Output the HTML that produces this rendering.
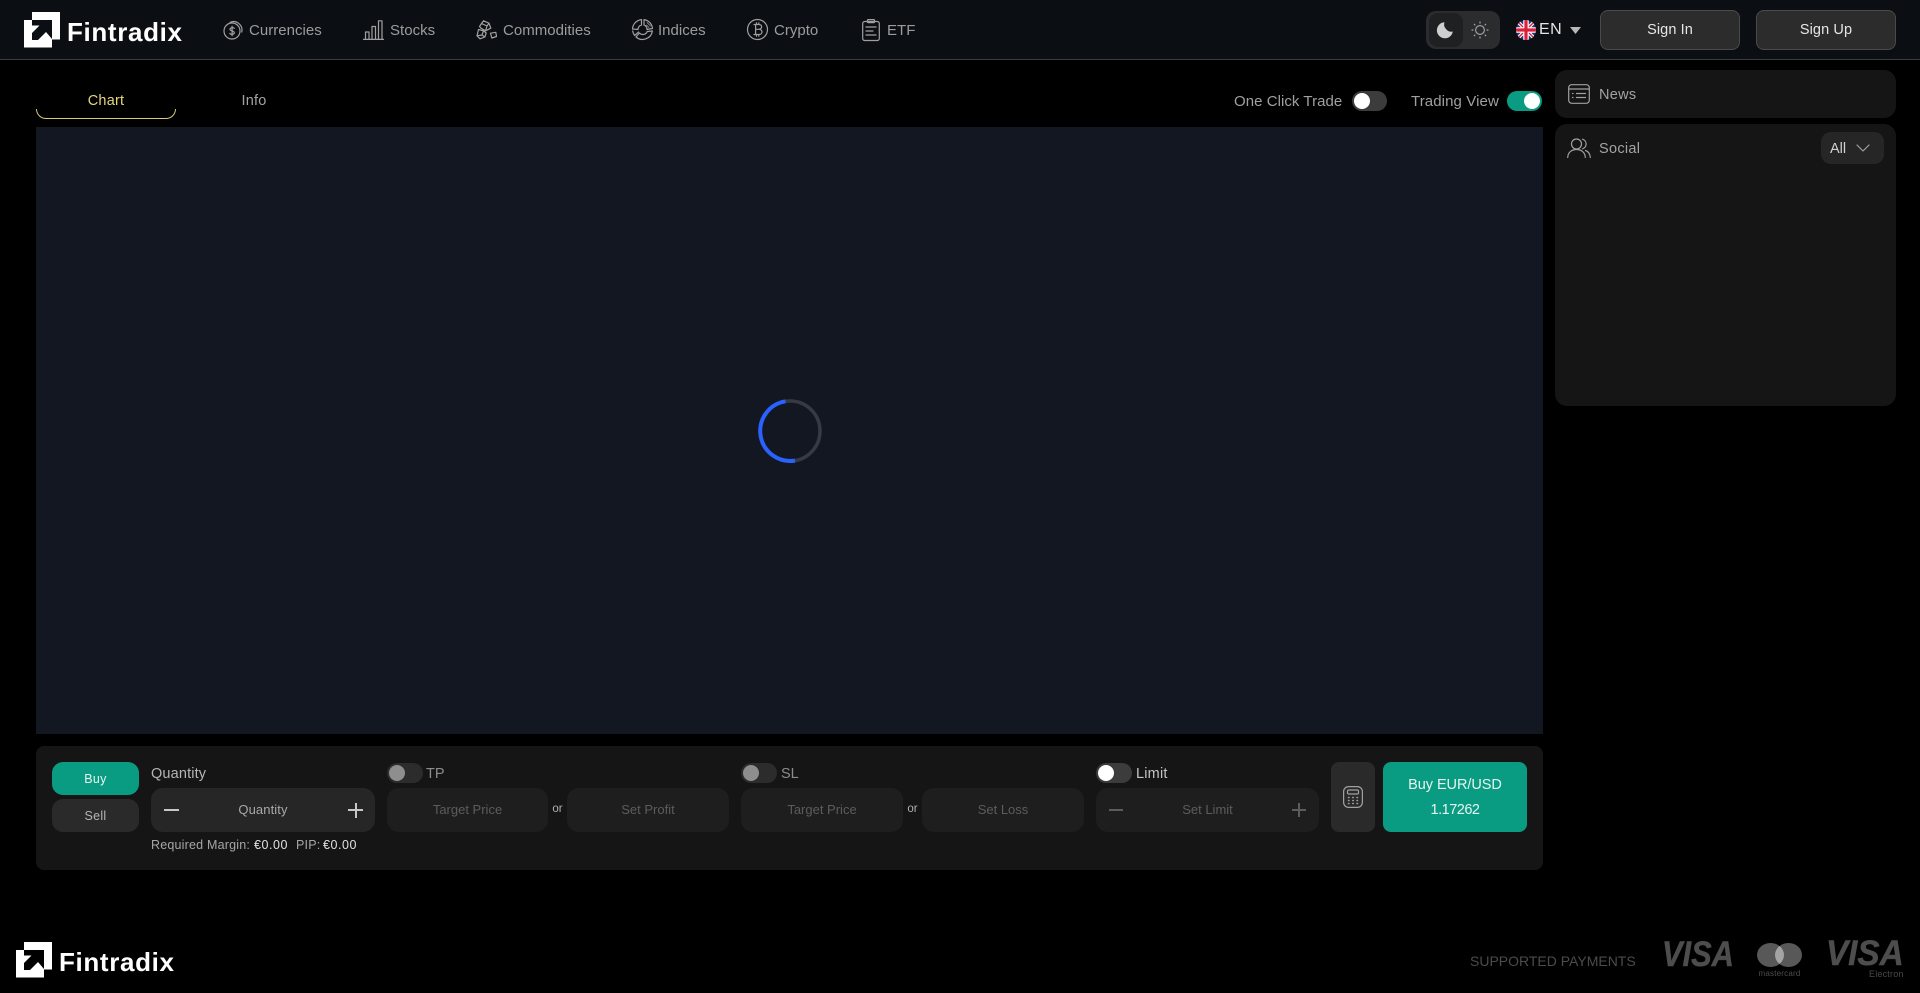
<!DOCTYPE html>
<html lang="en">
<head>
<meta charset="utf-8">
<title>Fintradix</title>
<style>
html,body{margin:0;padding:0;background:#000;width:1920px;height:993px;overflow:hidden}
body{position:relative;font-family:"Liberation Sans",sans-serif}
.a,.t{position:absolute}
.t{white-space:nowrap;line-height:20px;color:#a3a3a3;font-size:15px}
.c{text-align:center}
.nav{color:#9c9c9c;font-size:15px;top:20px;letter-spacing:.02px;line-height:21px}
svg{position:absolute;overflow:visible}
.ic{fill:none;stroke:#a0a0a0;stroke-width:1.2;stroke-linecap:round;stroke-linejoin:round}
.inp{position:absolute;top:788px;height:44px;border-radius:12px;background:#1e1e1e}
.ph{color:#5c5c5c;font-size:13px;top:800px;letter-spacing:0}
.sw{position:absolute;top:763px;height:20px;border-radius:10px;background:#2c2c2c}
.kn{position:absolute;width:16px;height:16px;border-radius:50%;top:2px;left:2px}
</style>
</head>
<body>

<!-- Header -->
<div class="a" style="left:0;top:0;width:1920px;height:59px;background:#0b0f13;border-bottom:1px solid #3a3c3e"></div>

<svg style="left:24px;top:12px" width="36" height="36" viewBox="0 0 36 36">
<path fill="#fff" d="M8 0H36V27.5H28V35.5H0V8H8Z"/>
<path fill="#0b0f13" d="M8 8H28V27L22 20 14 28H8V21L15.500 13.500H8Z"/>
</svg>
<div class="t" style="left:67px;top:20px;font-size:26px;line-height:24px;font-weight:700;color:#fff;letter-spacing:.65px">Fintradix</div>

<!-- Nav icons -->
<svg class="ic" style="left:223px;top:20px" width="20" height="20" viewBox="0 0 20 20" stroke="#b0b0b0" stroke-width="1.5">
<circle cx="9" cy="11" r="8"/><path d="M7 2.400A8.500 8.500 0 0 1 18.800 12"/><path d="M11.300 8.400C10.800 7.400 7.200 7.200 7 9.200 6.900 11.300 11.400 10.500 11.300 12.800 11.100 14.800 7.300 14.600 6.800 13.400M9.100 6.200V15.800"/>
</svg>
<svg class="ic" style="left:363px;top:20px" width="21" height="20" viewBox="0 0 21 20">
<path d="M.5 19.400H20.500M2.500 19V12H6V19M9 19V6.500H12.500V19M15.500 19V.8H19V19"/>
</svg>
<svg class="ic" style="left:476px;top:20px" width="21" height="20" viewBox="0 0 21 20" stroke-width="1.3">
<path d="M7.500 .8L13 3.200 14.800 8.200 9.500 10.800 5 8.200 3.500 6.500ZM5.500 3.500L11 6 9.500 10.800M11 6L13 3.200M7.500 .8L5.500 3.500 3.500 6.500"/>
<path d="M2.500 9.500L7.500 10.800 10.200 13 8.800 17 4 18.800 1 15.800ZM7.500 10.800L6 15 1 15.800M6 15L8.800 17"/>
<path d="M14.500 13.200L19.800 12.300 20.500 16.500 15.800 18Z"/>
</svg>
<svg class="ic" style="left:632px;top:19px" width="21" height="21" viewBox="0 0 21 21">
<path d="M9.500 .6A10 10 0 0 0 .5 10L6 10.500A4.600 4.600 0 0 1 9.500 6ZM12 .6A10 10 0 0 1 20.500 9.500L15 10.500A4.600 4.600 0 0 0 12 6ZM15.200 12.500L20.400 12A10 10 0 0 1 4 18L7.500 14A4.600 4.600 0 0 0 15.200 12.500ZM.7 12A10 10 0 0 0 2.600 16.500L6.500 13"/>
<path d="M15 3.500L18.500 7M14.500 6L17 8.500" stroke-width=".8"/>
</svg>
<svg class="ic" style="left:747px;top:19px" width="21" height="21" viewBox="0 0 21 21">
<circle cx="10.500" cy="10.500" r="10"/><path d="M7 5.500H12C15.500 5.500 15.500 10 12 10.300 16 10.500 16 15.500 12 15.500H7M8.600 5.500V15.500M8.600 10.300H12M9.500 3.800V5.500M11.800 3.800V5.500M9.500 15.500V17.200M11.800 15.500V17.200"/>
</svg>
<svg class="ic" style="left:862px;top:19px" width="18" height="22" viewBox="0 0 18 22" stroke-width="1.3">
<rect x=".7" y="2.500" width="16.600" height="19" rx="2"/><rect x="5.500" y=".6" width="7" height="3" rx=".8"/><path d="M4 8H14M4 12H11M4 16H14"/>
</svg>

<div class="t nav" style="left:249px">Currencies</div>
<div class="t nav" style="left:390px">Stocks</div>
<div class="t nav" style="left:503px">Commodities</div>
<div class="t nav" style="left:658px">Indices</div>
<div class="t nav" style="left:774px">Crypto</div>
<div class="t nav" style="left:887px">ETF</div>

<!-- Theme toggle -->
<div class="a" style="left:1426px;top:11px;width:74px;height:38px;border-radius:10px;background:#2b2c2e"></div>
<div class="a" style="left:1429px;top:13px;width:34px;height:34px;border-radius:9px;background:#1f2021"></div>
<svg style="left:1437px;top:22px" width="16" height="16" viewBox="0 0 16 16"><path fill="#cfcfcf" d="M7.500 .3A8 8 0 1 0 15.800 9.500 6.500 6.500 0 0 1 9 7 6.500 6.500 0 0 1 7.500 .3Z"/></svg>
<svg class="ic" style="left:1471px;top:21px" width="18" height="18" viewBox="0 0 18 18" stroke="#9a9a9a" stroke-width=".9"><circle cx="9" cy="9" r="4.400"/><path d="M9 1V2M9 16V17M1 9H2M16 9H17M3.300 3.300L3.900 3.900M14.100 14.100L14.700 14.700M3.300 14.700L3.900 14.100M14.100 3.900L14.700 3.300"/></svg>

<!-- Flag -->
<svg style="left:1516px;top:20px" width="20" height="20" viewBox="0 0 20 20">
<defs><clipPath id="fc"><ellipse cx="10" cy="10" rx="10" ry="10"/></clipPath></defs>
<g clip-path="url(#fc)"><rect width="20" height="20" fill="#27367c"/>
<path d="M0 0L20 20M20 0L0 20" stroke="#fff" stroke-width="3.500"/>
<path d="M0 0L20 20M20 0L0 20" stroke="#d8203a" stroke-width="1.400"/>
<path d="M10 0V20M0 10H20" stroke="#fff" stroke-width="5.500"/>
<path d="M10 0V20M0 10H20" stroke="#d8203a" stroke-width="3.200"/></g>
</svg>
<div class="t" style="left:1539px;top:20px;font-size:16px;color:#e4e4e4;letter-spacing:.4px">EN</div>
<svg style="left:1570px;top:27px" width="11" height="7" viewBox="0 0 11 7"><path fill="#b8b8b8" d="M0 0H11L5.500 7Z"/></svg>

<!-- Sign -->
<div class="t c" style="left:1600px;top:10px;width:140px;height:40px;box-sizing:border-box;line-height:39px;background:#2c2c2c;border:1px solid #4a4a4a;border-radius:8px;color:#e6e6e6;font-size:14.500px;letter-spacing:.1px">Sign In</div>
<div class="t c" style="left:1756px;top:10px;width:140px;height:40px;box-sizing:border-box;line-height:39px;background:#2c2c2c;border:1px solid #4a4a4a;border-radius:8px;color:#e6e6e6;font-size:14.500px;letter-spacing:.1px">Sign Up</div>

<!-- Tabs -->
<div class="t c" style="left:36px;top:91px;width:140px;color:#e6d67c;font-size:14.500px;letter-spacing:.2px;line-height:21px">Chart</div>
<div class="a" style="left:36px;top:109px;width:140px;height:10px;box-sizing:border-box;border:1px solid #d9cb7a;border-top:0;border-radius:0 0 10px 10px"></div>
<div class="t c" style="left:214px;top:91px;width:80px;color:#a3a3a3;font-size:14.500px;letter-spacing:.2px;line-height:21px">Info</div>

<div class="t" style="left:1234px;top:91px;font-size:15px;line-height:21px;color:#a0a0a0;letter-spacing:.05px">One Click Trade</div>
<div class="a" style="left:1352px;top:91px;width:35px;height:20px;border-radius:10px;background:#3c3c3c"><div class="kn" style="background:#fff"></div></div>
<div class="t" style="left:1411px;top:91px;font-size:15px;line-height:21px;color:#a0a0a0;letter-spacing:.1px">Trading View</div>
<div class="a" style="left:1507px;top:91px;width:35px;height:20px;border-radius:10px;background:#0a9c82"><div class="kn" style="background:#fff;left:17px"></div></div>

<!-- Right panels -->
<div class="a" style="left:1555px;top:70px;width:341px;height:48px;border-radius:12px;background:#151515"></div>
<svg class="ic" style="left:1568px;top:84px" width="22" height="20" viewBox="0 0 22 20" stroke="#8a8a8a" stroke-width="1.300"><rect x=".7" y=".7" width="20.600" height="18.600" rx="3"/><path d="M.7 5H21.300M4.500 9.500H5M4.500 13.500H5M8.500 9.500H17.500M8.500 13.500H17.500"/></svg>
<div class="t" style="left:1599px;top:85px;font-size:14.500px;line-height:21px;color:#a3a3a3;letter-spacing:.3px">News</div>

<div class="a" style="left:1555px;top:124px;width:341px;height:282px;border-radius:12px;background:#151515"></div>
<svg class="ic" style="left:1567px;top:138px" width="24" height="20" viewBox="0 0 24 20" stroke-width="1.200"><circle cx="9.500" cy="6" r="5"/><path d="M.7 19.500C1 14 5 11.500 9.500 11.500S18 14 18.300 19.500M15.500 1.200A5 5 0 0 1 15.500 10.800M18.500 12.500C21.500 13.500 23 16 23.300 19.500"/></svg>
<div class="t" style="left:1599px;top:139px;font-size:14.500px;line-height:21px;color:#a3a3a3;letter-spacing:.3px">Social</div>
<div class="a" style="left:1821px;top:132px;width:63px;height:32px;border-radius:10px;background:#262626"></div>
<div class="t" style="left:1830px;top:139px;font-size:14.500px;line-height:21px;color:#d2d2d2">All</div>
<svg class="ic" style="left:1856px;top:144px" width="14" height="8" viewBox="0 0 14 8" stroke="#d8d8d8" stroke-width="1.800"><path d="M1 1L7 7 13 1"/></svg>

<!-- Chart -->
<div class="a" style="left:36px;top:127px;width:1507px;height:607px;background:#131722"></div>
<svg style="left:758px;top:399px" width="64" height="64" viewBox="0 0 64 64">
<circle cx="32" cy="32" r="30" fill="none" stroke="#363a45" stroke-width="3.500"/>
<path d="M27.500 2.300A30 30 0 0 0 37 61.600" fill="none" stroke="#2962ff" stroke-width="4"/>
</svg>

<!-- Trade panel -->
<div class="a" style="left:36px;top:746px;width:1507px;height:124px;border-radius:8px;background:#151515"></div>
<div class="t c" style="left:52px;top:762px;width:87px;height:33px;line-height:34px;border-radius:11px;background:#0a9c82;color:#e6f5f1;font-size:12.500px;letter-spacing:.3px">Buy</div>
<div class="t c" style="left:52px;top:799px;width:87px;height:33px;line-height:34px;border-radius:11px;background:#2a2a2a;color:#b5b5b5;font-size:12.500px;letter-spacing:.3px">Sell</div>

<div class="t" style="left:151px;top:764px;font-size:14.500px;line-height:21px;color:#b5b5b5;letter-spacing:.15px">Quantity</div>
<div class="inp" style="left:151px;width:224px;background:#262626"></div>
<div class="a" style="left:164px;top:809px;width:15px;height:2px;background:#c8c8c8"></div>
<div class="a" style="left:348px;top:809px;width:15px;height:2px;background:#c8c8c8"></div>
<div class="a" style="left:354.500px;top:803px;width:2px;height:15px;background:#c8c8c8"></div>
<div class="t c" style="left:151px;top:800px;width:224px;font-size:13px;color:#a8a8a8;letter-spacing:.1px">Quantity</div>
<div class="t" style="left:151px;top:835px;font-size:12.500px;color:#a6a6a6;letter-spacing:.2px">Required Margin:</div>
<div class="t" style="left:254px;top:835px;font-size:12.500px;color:#e0e0e0;letter-spacing:.55px">€0.00</div>
<div class="t" style="left:296px;top:835px;font-size:12.500px;color:#a6a6a6;letter-spacing:.2px">PIP:</div>
<div class="t" style="left:323px;top:835px;font-size:12.500px;color:#e0e0e0;letter-spacing:.55px">€0.00</div>

<div class="sw" style="left:387px;width:36px"><div class="kn" style="background:#8e8e8e"></div></div>
<div class="t" style="left:426px;top:764px;font-size:14.500px;line-height:20px;color:#8c8c8c">TP</div>
<div class="inp" style="left:387px;width:161px"></div>
<div class="t c ph" style="left:387px;width:161px">Target Price</div>
<div class="t c" style="left:548px;top:799px;width:19px;font-size:11.500px;color:#b0b0b0">or</div>
<div class="inp" style="left:567px;width:162px"></div>
<div class="t c ph" style="left:567px;width:162px">Set Profit</div>

<div class="sw" style="left:741px;width:36px"><div class="kn" style="background:#8e8e8e"></div></div>
<div class="t" style="left:781px;top:764px;font-size:14.500px;color:#8c8c8c">SL</div>
<div class="inp" style="left:741px;width:162px"></div>
<div class="t c ph" style="left:741px;width:162px">Target Price</div>
<div class="t c" style="left:903px;top:799px;width:19px;font-size:11.500px;color:#b0b0b0">or</div>
<div class="inp" style="left:922px;width:162px"></div>
<div class="t c ph" style="left:922px;width:162px">Set Loss</div>

<div class="sw" style="left:1096px;width:36px;background:#3c3c3c"><div class="kn" style="background:#fff"></div></div>
<div class="t" style="left:1136px;top:764px;font-size:14.500px;color:#c4c4c4;letter-spacing:.2px">Limit</div>
<div class="inp" style="left:1096px;width:223px"></div>
<div class="a" style="left:1109px;top:809px;width:14px;height:2px;background:#5c5c5c"></div>
<div class="a" style="left:1292px;top:809px;width:14px;height:2px;background:#5c5c5c"></div>
<div class="a" style="left:1298px;top:803px;width:2px;height:14px;background:#5c5c5c"></div>
<div class="t c ph" style="left:1096px;width:223px">Set Limit</div>

<div class="a" style="left:1331px;top:762px;width:44px;height:70px;border-radius:8px;background:#2a2a2a"></div>
<svg class="ic" style="left:1343px;top:786px" width="20" height="22" viewBox="0 0 20 22" stroke="#909090" stroke-width="1.200"><rect x=".6" y=".6" width="18.800" height="20.800" rx="5"/><rect x="4.500" y="4" width="11" height="4" rx="1.200"/>
<path d="M5.500 11.500H6M9.800 11.500H10.300M14 11.500H14.500M5.500 14.500H6M9.800 14.500H10.300M14 14.500H14.500M5.500 17.500H6M9.800 17.500H10.300M14 17.500H14.500" stroke-width="1.500"/></svg>

<div class="a" style="left:1383px;top:762px;width:144px;height:70px;border-radius:8px;background:#0a9c82"></div>
<div class="t c" style="left:1383px;top:775px;width:144px;font-size:14.500px;line-height:21px;color:#e6f5f1;letter-spacing:-.05px">Buy EUR/USD</div>
<div class="t c" style="left:1383px;top:800px;width:144px;font-size:14.500px;line-height:21px;color:#e6f5f1;letter-spacing:-.5px">1.17262</div>

<!-- Footer -->
<svg style="left:16px;top:942px" width="36" height="36" viewBox="0 0 36 36">
<path fill="#fff" d="M8 0H36V27.500H28V35.500H0V8H8Z"/>
<path fill="#000" d="M8 8H28V27L22 20 14 28H8V21L15.500 13.500H8Z"/>
</svg>
<div class="t" style="left:59px;top:950px;font-size:26px;line-height:24px;font-weight:700;color:#fff;letter-spacing:.65px">Fintradix</div>

<div class="t" style="left:1470px;top:951px;font-size:14px;color:#4b4b4b;letter-spacing:0">SUPPORTED PAYMENTS</div>
<div class="t" style="left:1662px;top:940px;font-size:35px;line-height:30px;font-weight:700;font-style:italic;color:#4d4d4d;transform:scaleX(.88);transform-origin:0 50%;-webkit-text-stroke:.5px #4d4d4d">VISA</div>
<svg style="left:1757px;top:943px" width="45" height="24" viewBox="0 0 45 24">
<ellipse cx="13.500" cy="12" rx="13.500" ry="12" fill="#585858"/><ellipse cx="31.500" cy="12" rx="13.500" ry="12" fill="#585858"/>
<path d="M22.500 3.050A13.500 12 0 0 1 22.500 20.950 13.500 12 0 0 1 22.500 3.050Z" fill="#a4a4a4"/>
</svg>
<div class="t c" style="left:1757px;top:964px;width:45px;font-size:8px;color:#4d4d4d;letter-spacing:.2px">mastercard</div>
<div class="t" style="left:1826px;top:939px;font-size:35px;line-height:30px;font-weight:700;font-style:italic;color:#4d4d4d;transform:scaleX(.95);transform-origin:0 50%;-webkit-text-stroke:.5px #4d4d4d">VISA</div>
<div class="t" style="left:1869px;top:964px;font-size:9px;color:#4a4a4a;letter-spacing:.2px">Electron</div>

</body>
</html>
